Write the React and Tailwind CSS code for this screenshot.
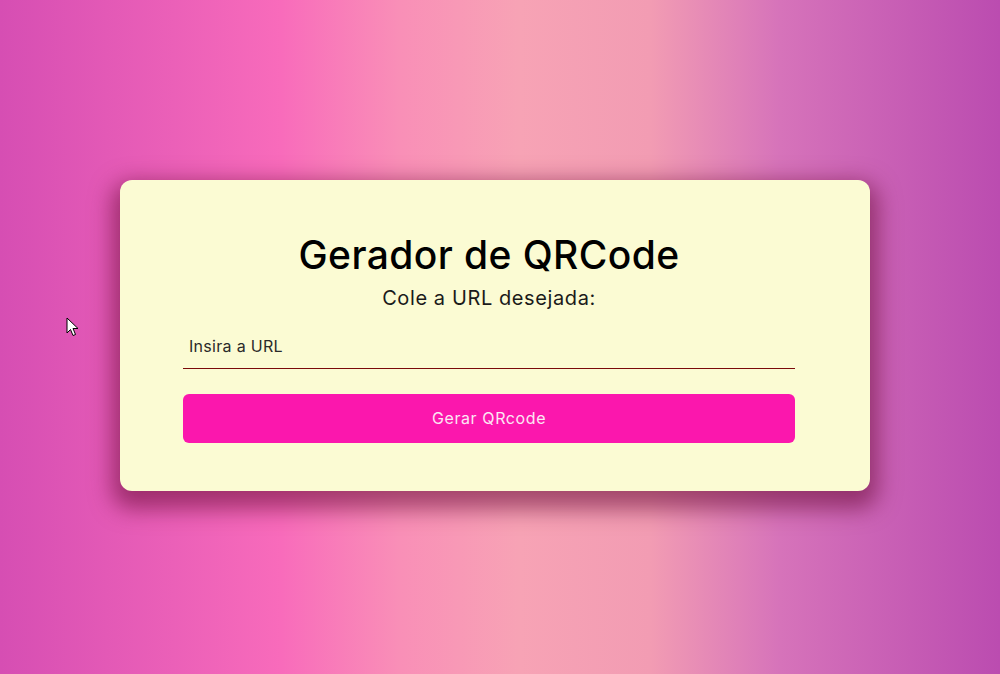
import { useState } from "react";

const App = () => {
  const [url, setUrl] = useState("");

  return (
    <main className="relative min-h-screen w-full flex items-center justify-center pr-[10px] pb-[4px] bg-[linear-gradient(to_right,#d64eb3_0%,#f86bbb_28%,#f98fb7_40%,#f7a3b5_52%,#f29cb3_65%,#d673ba_78%,#bb4cb0_100%)] font-['Inter','Noto_Sans',sans-serif]">
      {/* mouse pointer from the capture */}
      <svg
        className="absolute left-[66px] top-[317px]"
        width="14"
        height="21"
        viewBox="0 0 14 21"
      >
        <path
          d="M1 1 L1 16 L4.5 12.5 L7 18.5 L9.5 17.5 L7 11.5 L12 11.5 Z"
          fill="#ffffff"
          stroke="#000000"
          strokeWidth="1"
          strokeLinejoin="round"
        />
      </svg>

      <section className="w-[750px] h-[311px] rounded-xl bg-[#fbfbd3] pt-[51px] pl-[63px] pr-[75px] shadow-[0_10px_22px_8px_rgba(110,15,60,0.6)]">
        <h1 className="text-center text-[39px] leading-[48px] font-medium text-black tracking-[0.4px]">
          Gerador de QRCode
        </h1>
        <p className="text-center text-[20px] leading-[26px] text-[#1a1a1a] mt-[6px] tracking-[0.6px]">
          Cole a URL desejada:
        </p>
        <input
          type="text"
          value={url}
          onChange={(e) => setUrl(e.target.value)}
          placeholder="Insira a URL"
          className="mt-[14px] w-full h-[44px] px-[6px] bg-transparent border-b border-[#7a0a0a] text-[16px] tracking-[0.3px] text-[#222] placeholder:text-[#2a2a2a] outline-none"
        />
        <button className="mt-[25px] w-full h-[49px] rounded-md bg-[#fb17ad] text-[16px] tracking-[0.6px] text-[#fbe6f3]">
          Gerar QRcode
        </button>
      </section>
    </main>
  );
};

export default App;
